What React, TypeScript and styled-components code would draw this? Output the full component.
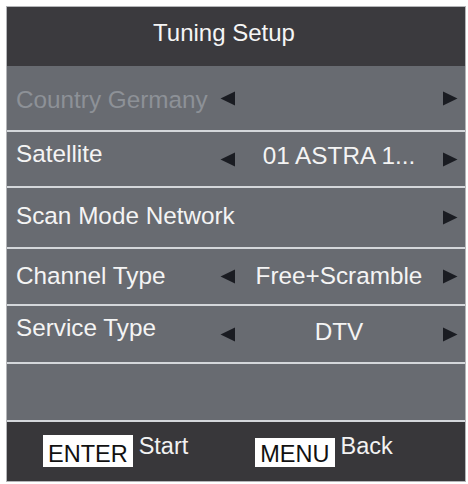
import React from "react";
import styled, { createGlobalStyle } from "styled-components";

const Global = createGlobalStyle`
  html, body { margin: 0; padding: 0; background: #ffffff; }
  body { font-family: "Liberation Sans", Arial, sans-serif; }
`;

const Panel = styled.div`
  box-sizing: border-box;
  width: 460px;
  height: 476px;
  margin: 6px 0 0 6px;
  border: 1px solid #b4b5b8;
  display: flex;
  flex-direction: column;
  font-family: "Liberation Sans", Arial, sans-serif;
  font-size: 24.3px;
  line-height: 1;
`;

const Header = styled.div`
  box-sizing: border-box;
  height: 59px;
  flex: none;
  background: #3b3a3e;
  color: #f5f5f5;
  display: flex;
  justify-content: center;
  align-items: flex-start;
  padding: 14px 24px 0 0;
  font-size: 24px;
`;

const Row = styled.div<{ $h: number }>`
  box-sizing: border-box;
  height: ${(p) => p.$h}px;
  flex: none;
  background: #686b71;
  display: grid;
  grid-template-columns: 204px 15px 1fr 15px;
  align-items: center;
  padding: 0 7px 0 9px;
  & + & {
    border-top: 2px solid #d4d7db;
  }
`;

const shift = (dy: number) =>
  dy >= 0 ? `margin-top: ${dy * 2}px;` : `margin-bottom: ${-dy * 2}px;`;

const Label = styled.div<{ $dim?: boolean; $dy?: number }>`
  grid-column: 1;
  white-space: nowrap;
  overflow: visible;
  color: ${(p) => (p.$dim ? "#8d9197" : "#f4f4f4")};
  ${(p) => shift(p.$dy ?? 0)}
`;

const Value = styled.div<{ $dy?: number }>`
  grid-column: 3;
  text-align: center;
  white-space: nowrap;
  color: #f4f4f4;
  ${(p) => shift(p.$dy ?? 0)}
`;

const ArrowCell = styled.div<{ $col: number }>`
  grid-column: ${(p) => p.$col};
  display: flex;
  align-items: center;
  justify-content: center;
  height: 15px;
`;

const Footer = styled.div`
  box-sizing: border-box;
  flex: 1;
  background: #38373a;
  border-top: 2px solid #d4d7db;
  display: flex;
  align-items: flex-start;
  gap: 67px;
  padding: 13px 0 0 36px;
  font-size: 23.5px;
`;

const KeyGroup = styled.div`
  display: flex;
  align-items: flex-start;
  gap: 6px;
  height: 32px;
`;

const Key = styled.div<{ $h: number }>`
  box-sizing: border-box;
  align-self: flex-end;
  height: ${(p) => p.$h}px;
  background: #ffffff;
  color: #111111;
  display: flex;
  align-items: flex-end;
  padding: 0 5px 1px;
`;

const Hint = styled.div`
  color: #f2f2f2;
`;

const Arrow = ({ dir }: { dir: "left" | "right" }) => (
  <svg width="15" height="15" viewBox="0 0 15 15">
    <polygon
      points={dir === "left" ? "15,0.5 15,14.5 0.5,7.5" : "0,0.5 0,14.5 14.5,7.5"}
      fill="#1a1c22"
    />
  </svg>
);

type Item = {
  label: string;
  value?: string;
  h: number;
  left: boolean;
  dim?: boolean;
  ldy?: number;
  vdy?: number;
};

const items: Item[] = [
  { label: "Country Germany", h: 64, left: true, dim: true, ldy: 2 },
  { label: "Satellite", value: "01 ASTRA 1...", h: 56, left: true, ldy: -5, vdy: -3 },
  { label: "Scan Mode Network", h: 61, left: false, ldy: -1 },
  { label: "Channel Type", value: "Free+Scramble", h: 57, left: true, ldy: 0, vdy: 0 },
  { label: "Service Type", value: "DTV", h: 58, left: true, ldy: -6, vdy: -2 },
];

export default function App() {
  return (
    <>
      <Global />
      <Panel>
        <Header>Tuning Setup</Header>
        {items.map((it) => (
          <Row key={it.label} $h={it.h}>
            <Label $dim={it.dim} $dy={it.ldy}>
              {it.label}
            </Label>
            {it.left && (
              <ArrowCell $col={2}>
                <Arrow dir="left" />
              </ArrowCell>
            )}
            {it.value && <Value $dy={it.vdy}>{it.value}</Value>}
            <ArrowCell $col={4}>
              <Arrow dir="right" />
            </ArrowCell>
          </Row>
        ))}
        <Row $h={58} />
        <Footer>
          <KeyGroup>
            <Key $h={32}>ENTER</Key>
            <Hint>Start</Hint>
          </KeyGroup>
          <KeyGroup>
            <Key $h={29}>MENU</Key>
            <Hint>Back</Hint>
          </KeyGroup>
        </Footer>
      </Panel>
    </>
  );
}
